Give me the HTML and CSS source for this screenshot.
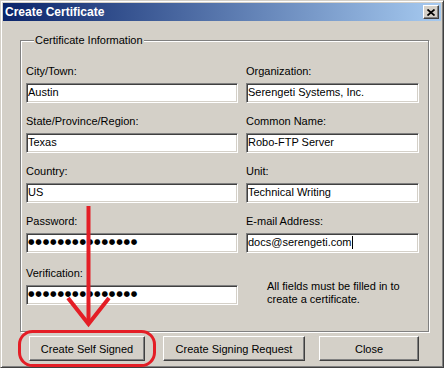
FILE: index.html
```html
<!DOCTYPE html>
<html lang="en">
<head>
    <meta charset="UTF-8">
    <meta name="viewport" content="width=device-width, initial-scale=1.0">
    <title>Create Certificate</title>
    <link rel="stylesheet" href="styles.css">
</head>
<body>
    <div class="window">
        <div class="titlebar">
            <span class="title">Create Certificate</span>
            <button type="button" class="close-btn" aria-label="Close">
                <svg width="8" height="7" viewBox="0 0 8 7">
                    <path d="M0.5 0.5 L7.5 6.5 M7.5 0.5 L0.5 6.5" stroke="#000" stroke-width="1.7" fill="none"/>
                </svg>
            </button>
        </div>

        <div class="dialog-body">
            <fieldset class="group">
                <legend>Certificate Information</legend>
                <div class="fields">
                    <div class="field">
                        <label>City/Town:</label>
                        <div class="textbox">Austin</div>
                    </div>
                    <div class="field">
                        <label>Organization:</label>
                        <div class="textbox">Serengeti Systems, Inc.</div>
                    </div>

                    <div class="field">
                        <label>State/Province/Region:</label>
                        <div class="textbox">Texas</div>
                    </div>
                    <div class="field">
                        <label>Common Name:</label>
                        <div class="textbox">Robo-FTP Server</div>
                    </div>

                    <div class="field">
                        <label>Country:</label>
                        <div class="textbox">US</div>
                    </div>
                    <div class="field">
                        <label>Unit:</label>
                        <div class="textbox">Technical Writing</div>
                    </div>

                    <div class="field">
                        <label>Password:</label>
                        <div class="textbox password">●●●●●●●●●●●●●●●</div>
                    </div>
                    <div class="field">
                        <label>E-mail Address:</label>
                        <div class="textbox">docs@serengeti.com<span class="caret"></span></div>
                    </div>

                    <div class="field last-row">
                        <label>Verification:</label>
                        <div class="textbox password">●●●●●●●●●●●●●●●</div>
                    </div>
                    <div class="note last-row">
                        All fields must be filled in to<br>
                        create a certificate.
                    </div>
                </div>
            </fieldset>

            <div class="button-row">
                <button type="button" class="btn btn-self">Create Self Signed</button>
                <button type="button" class="btn btn-request">Create Signing Request</button>
                <button type="button" class="btn btn-close">Close</button>
            </div>
        </div>

        <!-- red markup drawn over the screenshot -->
        <svg class="annotation" width="444" height="368" viewBox="0 0 444 368">
            <rect x="18.5" y="330.5" width="135" height="34" rx="13" ry="13" fill="none" stroke="#e41e26" stroke-width="3"/>
            <line x1="87.5" y1="205" x2="87.5" y2="321" stroke="#e41e26" stroke-width="4"/>
            <polyline points="67,297 87.5,323 108,297" fill="none" stroke="#e41e26" stroke-width="4"/>
        </svg>
    </div>
</body>
</html>
```

FILE: styles.css
```css
body {
    margin: 0;
    font-family: "Liberation Sans", Arial, sans-serif;
    font-size: 11px;
    color: #000;
    background: #d4d0c8;
}
.window {
    position: relative;
    width: 444px;
    height: 368px;
    box-sizing: border-box;
    padding: 2px;
    background: #d4d0c8;
    border: 1px solid;
    border-color: #d4d0c8 #404040 #404040 #d4d0c8;
    box-shadow: inset 1px 1px 0 #fff, inset -1px -1px 0 #808080;
}
.titlebar {
    height: 18px;
    display: flex;
    align-items: center;
    justify-content: space-between;
    background: linear-gradient(to right, #0a246a, #a6caf0);
}
.title {
    padding-left: 2px;
    color: #fff;
    font-weight: bold;
    font-size: 12px;
    line-height: 18px;
}
.close-btn {
    width: 16px;
    height: 14px;
    margin-right: 2px;
    padding: 0;
    display: flex;
    align-items: center;
    justify-content: center;
    background: #d4d0c8;
    border: 1px solid;
    border-color: #fff #404040 #404040 #fff;
    box-shadow: inset -1px -1px 0 #808080;
}
.dialog-body {
    padding: 0 0 0 17px;
}
.group {
    width: 409px;
    height: 298px;
    box-sizing: border-box;
    margin: 13px 0 0 0;
    padding: 18px 9px 0 5px;
    border: 1px solid #808080;
    box-shadow: inset 1px 1px 0 #fff, 1px 1px 0 #fff;
}
.group legend {
    margin-left: 8px;
    padding: 0 1px;
    line-height: 13px;
    background: #d4d0c8;
}
.fields {
    display: grid;
    grid-template-columns: 212px 173px;
    column-gap: 8px;
    row-gap: 12px;
}
.field label {
    display: block;
    line-height: 13px;
    margin-bottom: 5px;
}
.textbox {
    height: 20px;
    box-sizing: border-box;
    padding-left: 1px;
    line-height: 16px;
    white-space: nowrap;
    overflow: hidden;
    background: #fff;
    border: 1px solid;
    border-color: #808080 #fff #fff #808080;
    box-shadow: inset 1px 1px 0 #404040, inset -1px -1px 0 #d4d0c8;
}
.password {
    font-family: "DejaVu Sans", sans-serif;
    font-size: 7.5px;
    letter-spacing: 0.8px;
}
.caret {
    display: inline-block;
    width: 1px;
    height: 13px;
    background: #000;
    vertical-align: -3px;
}
.last-row {
    margin-top: 2px;
}
.note {
    padding: 13px 0 0 21px;
    line-height: 13px;
}
.button-row {
    display: flex;
    padding: 4px 0 0 9px;
}
.btn {
    height: 25px;
    padding: 0;
    font-family: inherit;
    font-size: 11px;
    color: #000;
    background: #d4d0c8;
    border: 1px solid;
    border-color: #fff #404040 #404040 #fff;
    box-shadow: inset -1px -1px 0 #808080;
}
.btn-self {
    width: 116px;
}
.btn-request {
    width: 142px;
    margin-left: 18px;
}
.btn-close {
    width: 100px;
    margin-left: 14px;
}
.annotation {
    position: absolute;
    top: 0;
    left: 0;
    pointer-events: none;
}
```
